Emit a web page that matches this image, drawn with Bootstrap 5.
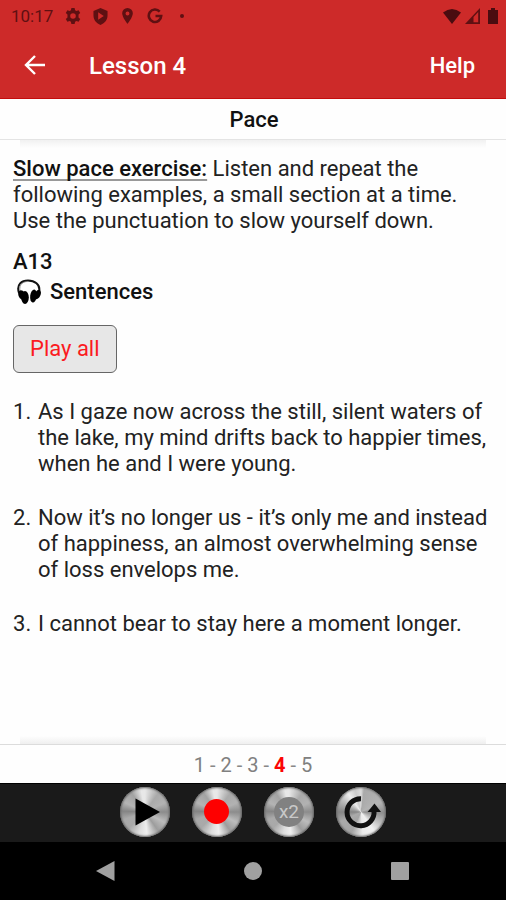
<!DOCTYPE html>
<html lang="en">
<head>
<meta charset="utf-8">
<meta name="viewport" content="width=device-width, initial-scale=1">
<title>Lesson 4 - Pace</title>
<link href="https://cdn.jsdelivr.net/npm/bootstrap@5.3.0/dist/css/bootstrap.min.css" rel="stylesheet">
<style>
body{font-family:Roboto,"Liberation Sans",sans-serif;font-size:22px;line-height:26px;color:#222;background:#fefefe}
.topbar{background:#cd2a29;border-bottom:1px solid #c40d0d}
.status{height:32px;color:#5f1012;font-size:17px;padding:0 8px 0 11px}
.status .left{gap:12px}
.status .right{gap:4px}
.appbar{height:66px;padding:2px 31px 0 22px}
.appbar a{color:#fff}
.heading{font-size:22px;line-height:26px;font-weight:500}
.title{font-size:24px}
.back{margin-right:41px}
.subbar{height:41px;border-bottom:1px solid #e4e4e4;color:#111;padding:2px 0 0 2px}
.shade{height:8px;margin:0 20px;background:linear-gradient(#f1f1f1,#fefefe)}
.shade-up{background:linear-gradient(#fefefe,#efefef)}
.lesson{padding:8px 13px}
.strong{font-weight:500;color:#111}
.lead-in{text-decoration:underline;text-decoration-color:#999;text-decoration-thickness:2px;text-underline-offset:3px;text-decoration-skip-ink:none}
.unit{margin-top:15px}
.track{gap:9px;margin-top:4px}
.play-all{font-size:22px;line-height:26px;color:#fb1b1f;background:#e7e7e7;border:1px solid #666;border-radius:6px;padding:10px 16px;margin:20px 0 26px}
.play-all:hover{color:#fb1b1f;background:#ddd;border-color:#666}
.lines{list-style:none;display:grid;gap:28px;counter-reset:n}
.lines li{display:flex;counter-increment:n}
.lines li::before{content:counter(n) ".";flex:0 0 25px}
.pager{height:39px;border-top:1px solid #dcdcdc;font-size:20px;gap:5px;color:#888;padding-top:2px}
.pager a{color:#808080}
.pager a.here{color:#fb0505;font-weight:700}
.controls{height:59px;background:#1a1a1a;border-top:1px solid #000;gap:22px;padding-bottom:2px}
.disc{width:50px;height:50px;background:conic-gradient(#e8e8e8 0deg,#aaa 35deg,#b2b2b2 65deg,#8c8c8c 90deg,#bcbcbc 118deg,#9d9d9d 145deg,#eee 175deg,#ddd 195deg,#a9a9a9 225deg,#aaa 250deg,#858585 272deg,#b4b4b4 295deg,#a3a3a3 325deg,#e8e8e8 350deg,#e8e8e8 360deg);box-shadow:inset 0 0 2px 1px #666}
.bright{background:conic-gradient(#ddd 0deg,#aaa 8deg,#b4b4b4 65deg,#8f8f8f 92deg,#c9c9c9 125deg,#f1f1f1 145deg,#eaeaea 175deg,#a5a5a5 205deg,#aaa 245deg,#858585 270deg,#b9b9b9 300deg,#eee 325deg,#ccc 345deg,#ddd 360deg)}
.speed{width:30px;height:30px;background:#818181;color:#c9c9c9;font-size:19px;line-height:30px}
.sysnav{height:58px;background:#000;padding:0 96px}
.sysnav button,.disc{border:0;padding:0}
.sysnav button{background:none}
svg{display:block}
</style>
</head>
<body>
<div class="min-vh-100 d-flex flex-column">
  <header class="topbar">
    <div class="status d-flex align-items-center justify-content-between">
      <div class="left d-flex align-items-center">
        <span>10:17</span>
        <svg width="16" height="16" viewBox="0 0 20 20" aria-hidden="true"><path fill="currentColor" fill-rule="evenodd" d="M8 0h4l.6 2.7 1.7 1 2.7-.9 2 3.5-2.1 1.9v3.6l2.1 1.9-2 3.5-2.7-.9-1.7 1L12 20H8l-.6-2.7-1.7-1-2.7.9-2-3.5 2.1-1.9V8.200L1 6.300l2-3.500 2.700.9 1.700-1zM10 6.500a3.500 3.500 0 100 7 3.500 3.500 0 000-7z"/></svg>
        <svg width="15" height="17" viewBox="0 0 16 18" aria-hidden="true"><path fill="currentColor" fill-rule="evenodd" d="M8 0l7.500 3v5c0 5-3.500 8.500-7.500 10C4 16.500.5 13 .5 8V3zM5.500 4.500v8l6-4z"/></svg>
        <svg width="15" height="16" viewBox="0 0 15 18" aria-hidden="true"><path fill="currentColor" fill-rule="evenodd" d="M7.500 0a6 6 0 016 6c0 4.500-6 12-6 12s-6-7.500-6-12a6 6 0 016-6zm0 4a2.200 2.200 0 100 4.400 2.200 2.200 0 000-4.400z"/></svg>
        <svg width="16" height="16" viewBox="0 0 16 16" aria-hidden="true"><path fill="none" stroke="currentColor" stroke-width="2.600" d="M12.700 3.700A6.200 6.200 0 1014.200 8H8.500"/></svg>
        <svg width="14" height="16" viewBox="0 0 14 16" aria-hidden="true"><circle cx="7" cy="8" r="2" fill="currentColor"/></svg>
      </div>
      <div class="right d-flex align-items-center">
        <svg width="18" height="15" viewBox="0 0 18 15" aria-hidden="true"><path fill="#4a0c10" d="M0 3.500Q9-3.500 18 3.500L9 15z"/></svg>
        <svg width="15" height="16" viewBox="0 0 15 16" aria-hidden="true"><path fill="currentColor" fill-rule="evenodd" d="M15 0v16H0zM13.200 4L8.500 9v5.300h4.700z"/></svg>
        <svg class="ms-1" width="10" height="16" viewBox="0 0 10 16" aria-hidden="true"><path fill="#4a0c10" d="M3 0h4v2h3v14H0V2h3z"/></svg>
      </div>
    </div>
    <nav class="appbar d-flex align-items-center">
      <a class="back" href="#" aria-label="Back"><svg width="26" height="26" viewBox="0 0 26 26"><path fill="none" stroke="#fff" stroke-width="2.400" d="M23 12H5M13 3l-9 9 9 9"/></svg></a>
      <h1 class="heading title mb-0 text-white">Lesson 4</h1>
      <a class="heading ms-auto text-decoration-none" href="#">Help</a>
    </nav>
  </header>
  <div class="subbar d-flex align-items-center justify-content-center"><h2 class="heading mb-0">Pace</h2></div>
  <div class="shade"></div>
  <main class="lesson">
    <p class="mb-0"><span class="strong lead-in">Slow pace exercise:</span> Listen and repeat the following examples, a small section at a time. Use the punctuation to slow yourself down.</p>
    <div class="unit strong">A13</div>
    <div class="track strong d-flex align-items-center">
      <svg class="ms-1" width="24" height="26" viewBox="0 0 24 26" aria-hidden="true"><path fill="none" stroke="#111" stroke-width="2" d="M2 14C-1 5 5 1.500 11 1.500S24 5 22 13"/><path fill="none" stroke="#888" stroke-width=".8" d="M3 12C2 5 6 2.500 11 2.500"/><ellipse cx="5" cy="16" rx="3.500" ry="5" transform="rotate(-25 5 16)"/><ellipse cx="8" cy="18.500" rx="3.800" ry="6.500"/><ellipse cx="16.500" cy="17" rx="3.300" ry="6.500" transform="rotate(8 16.500 17)"/><ellipse cx="20.500" cy="15.500" rx="3" ry="5" transform="rotate(25 20.500 15.500)"/></svg>
      <span>Sentences</span>
    </div>
    <button type="button" class="btn play-all">Play all</button>
    <ol class="lines p-0 mb-0">
      <li><span>As I gaze now across the still, silent waters of the lake, my mind drifts back to happier times, when he and I were young.</span></li>
      <li><span>Now it’s no longer us - it’s only me and instead of happiness, an almost overwhelming sense of loss envelops me.</span></li>
      <li><span>I cannot bear to stay here a moment longer.</span></li>
    </ol>
  </main>
  <div class="mt-auto"><div class="shade shade-up"></div></div>
  <footer>
    <nav class="pager d-flex align-items-center justify-content-center" aria-label="Lesson pages">
      <a class="text-decoration-none" href="#">1</a><span>-</span><a class="text-decoration-none" href="#">2</a><span>-</span><a class="text-decoration-none" href="#">3</a><span>-</span><a class="text-decoration-none here" href="#" aria-current="page">4</a><span>-</span><a class="text-decoration-none" href="#">5</a>
    </nav>
    <div class="controls d-flex align-items-center justify-content-center">
      <button type="button" class="disc rounded-circle" aria-label="Play"><svg width="50" height="50" viewBox="0 0 50 50"><path d="M15.500 11.500v27L40 25z"/></svg></button>
      <button type="button" class="disc rounded-circle" aria-label="Record"><svg width="50" height="50" viewBox="0 0 50 50"><circle cx="24.500" cy="24.500" r="12.500" fill="#fe0000"/></svg></button>
      <button type="button" class="disc rounded-circle d-flex align-items-center justify-content-center"><span class="speed rounded-circle">x2</span></button>
      <button type="button" class="disc bright rounded-circle" aria-label="Repeat"><svg width="50" height="50" viewBox="0 0 50 50"><path fill="none" stroke="#111" stroke-width="5" d="M25 11.700A13.500 13.500 0 1038 24"/><path fill="#111" d="M31.500 25l7-8.500 6.500 8.500z"/></svg></button>
    </div>
    <nav class="sysnav d-flex align-items-center justify-content-between" aria-label="System">
      <button type="button" aria-label="Back"><svg width="19" height="22" viewBox="0 0 19 22"><path fill="#a0a0a0" d="M18.500 1v20L0 11z"/></svg></button>
      <button type="button" aria-label="Home"><svg width="18" height="18" viewBox="0 0 18 18"><circle cx="9" cy="9" r="9" fill="#a0a0a0"/></svg></button>
      <button type="button" aria-label="Recent apps"><svg width="20" height="20" viewBox="0 0 20 20"><rect x="1" y="1" width="18" height="18" rx="1" fill="#a0a0a0"/></svg></button>
    </nav>
  </footer>
</div>
<script src="https://cdn.jsdelivr.net/npm/bootstrap@5.3.0/dist/js/bootstrap.bundle.min.js"></script>
</body>
</html>
